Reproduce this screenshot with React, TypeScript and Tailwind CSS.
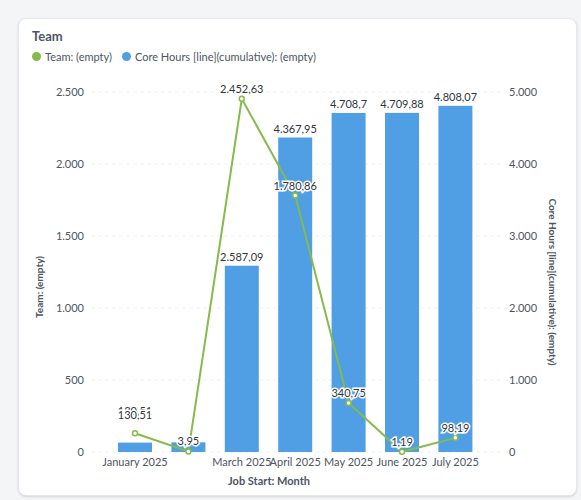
import React from "react";

const months = ["January 2025", "", "March 2025", "April 2025", "May 2025", "June 2025", "July 2025"];
const cum = [130.51, 134.46, 2587.09, 4367.95, 4708.7, 4709.88, 4808.07];
const cumLbl = ["130,51", "", "2.587,09", "4.367,95", "4.708,7", "4.709,88", "4.808,07"];
const team = [130.51, 3.95, 2452.63, 1780.86, 340.75, 1.19, 98.19];
const teamLbl = ["130,51", "3,95", "2.452,63", "1.780,86", "340,75", "1,19", "98,19"];
const cx = (i: number) => 135 + i * 53.4 - 19;
const y0 = 451 - 18;
const yl = (v: number) => y0 - (v / 2500) * 360;
const yr = (v: number) => y0 - (v / 5000) * 360;

export default function App() {
  const halo = { paintOrder: "stroke" as const, stroke: "white", strokeWidth: 3 };
  return (
    <div className="w-[581px] h-[500px] bg-[#f3f5f7] pt-[18px] pl-[18px] pr-[4px] pb-[4px]" style={{ fontFamily: "Lato, 'Open Sans', sans-serif" }}>
      <div className="w-full h-full bg-white rounded-lg border border-[#e4e7eb] shadow-sm relative">
        <div className="pl-[13px] pt-[8px]">
          <div className="text-[13px] font-bold text-[#4c5563]">Team</div>
          <div className="flex items-center gap-[10px] text-[11px] text-[#4c5563] mt-[2px]">
            <span className="flex items-center gap-[4px]"><span className="w-[9px] h-[9px] rounded-full bg-[#84bb4c]" />Team: (empty)</span>
            <span className="flex items-center gap-[4px]"><span className="w-[9px] h-[9px] rounded-full bg-[#509ee3]" />Core Hours [line](cumulative): (empty)</span>
          </div>
        </div>
        <svg width="559" height="478" className="absolute left-0 top-0" style={{ fontFamily: "Lato, sans-serif" }}>
          {[0, 500, 1000, 1500, 2000, 2500].map((v) => (
            <g key={v}>
              <line x1={72} x2={490} y1={yl(v)} y2={yl(v)} stroke="#edf0f2" strokeDasharray="4 3" />
              <text x={65} y={yl(v) + 4} textAnchor="end" fontSize="11" fill="#4c5563">{v === 0 ? "0" : v.toLocaleString("de-DE")}</text>
              <text x={490} y={yr(v * 2) + 4} fontSize="11" fill="#4c5563">{v === 0 ? "0" : (v * 2).toLocaleString("de-DE") }</text>
            </g>
          ))}
          {cum.map((v, i) => (
            <g key={i}>
              <rect x={cx(i) - 17} y={yr(v)} width={34} height={y0 - yr(v)} fill="#509ee3" />
              {cumLbl[i] && <text x={cx(i)} y={yr(v) - (i === 0 ? 28 : 5)} textAnchor="middle" fontSize="11" fill="#2e353b" style={halo}>{cumLbl[i]}</text>}
              <text x={cx(i)} y={y0 + 14} textAnchor="middle" fontSize="11" fill="#4c5563">{months[i]}</text>
            </g>
          ))}
          <polyline points={team.map((v, i) => `${cx(i)},${yl(v)}`).join(" ")} fill="none" stroke="#84bb4c" strokeWidth="2" />
          {team.map((v, i) => (
            <g key={i}>
              <circle cx={cx(i)} cy={yl(v)} r={2.5} fill="white" stroke="#84bb4c" strokeWidth="1.5" />
              <text x={cx(i)} y={yl(v) - (i === 0 ? 14 : 6)} textAnchor="middle" fontSize="11" fill="#2e353b" style={halo}>{teamLbl[i]}</text>
            </g>
          ))}
          <text x={250} y={y0 + 33} textAnchor="middle" fontSize="11" fontWeight="bold" fill="#4c5563">Job Start: Month</text>
          <text transform={`translate(24,${y0 - 165}) rotate(-90)`} textAnchor="middle" fontSize="10" fontWeight="bold" fill="#4c5563">Team: (empty)</text>
          <text transform={`translate(530,${y0 - 170}) rotate(90)`} textAnchor="middle" fontSize="10" fontWeight="bold" fill="#4c5563">Core Hours [line](cumulative): (empty)</text>
        </svg>
      </div>
    </div>
  );
}
